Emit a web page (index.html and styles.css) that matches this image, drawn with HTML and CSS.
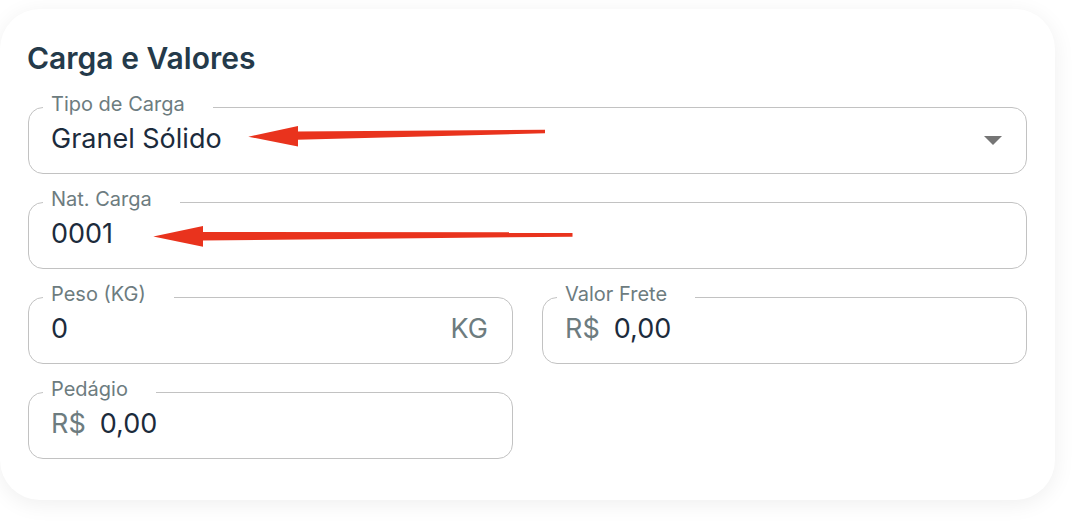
FILE: index.html
```html
<!DOCTYPE html>
<html lang="pt-BR">
<head>
<meta charset="utf-8">
<title>Carga e Valores</title>
<link rel="stylesheet" href="styles.css">
</head>
<body>
<main class="page">
  <section class="card">
    <h2 class="card-title">Carga e Valores</h2>
    <div class="fields">
      <fieldset class="field field-full">
        <legend class="field-label">Tipo de Carga</legend>
        <div class="field-row">
          <span class="field-value">Granel Sólido</span>
          <svg class="caret" width="18" height="9" viewBox="0 0 18 9" aria-hidden="true"><path d="M0 0 H18 L9 9 Z" fill="#757575"/></svg>
        </div>
      </fieldset>
      <fieldset class="field field-full">
        <legend class="field-label">Nat. Carga</legend>
        <div class="field-row">
          <span class="field-value">0001</span>
        </div>
      </fieldset>
      <fieldset class="field">
        <legend class="field-label">Peso (KG)</legend>
        <div class="field-row">
          <span class="field-value">0</span>
          <span class="adorn adorn-end">KG</span>
        </div>
      </fieldset>
      <fieldset class="field">
        <legend class="field-label">Valor Frete</legend>
        <div class="field-row">
          <span class="adorn adorn-start">R$</span>
          <span class="field-value">0,00</span>
        </div>
      </fieldset>
      <fieldset class="field">
        <legend class="field-label">Pedágio</legend>
        <div class="field-row">
          <span class="adorn adorn-start">R$</span>
          <span class="field-value">0,00</span>
        </div>
      </fieldset>
    </div>
  </section>
  <svg class="annotations" width="1083" height="527" viewBox="0 0 1083 527" aria-hidden="true">
    <polygon points="297,131.5 545,129.8 545,133.2 297,139.8" fill="#e9331d"/>
    <polygon points="248.3,136.7 298,126 298,146.5" fill="#e9331d"/>
    <polygon points="202,232 572.5,232.3 572.5,236.7 202,240.5" fill="#e9331d"/>
    <polygon points="153.3,236.4 203,226 203,246.7" fill="#e9331d"/>
  </svg>
</main>
</body>
</html>
```

FILE: styles.css
```css
* { box-sizing: border-box; }

html, body {
  margin: 0;
  padding: 0;
  background: #ffffff;
}

body {
  font-family: Inter, "Noto Sans", "Liberation Sans", sans-serif;
  width: 1083px;
  height: 527px;
  overflow: hidden;
}

.page {
  position: relative;
  width: 1083px;
  height: 527px;
  padding-top: 9px;
}

.card {
  width: 1055px;
  background: #ffffff;
  border-radius: 40px;
  box-shadow: 0 4px 22px rgba(0, 0, 0, 0.065);
  padding: 31px 28px 41px 28px;
}

.card-title {
  margin: 0 0 17px -1px;
  font-size: 30px;
  line-height: 36px;
  font-weight: 600;
  color: #243a4a;
}

.fields {
  display: grid;
  grid-template-columns: 1fr 1fr;
  column-gap: 29px;
  row-gap: 14px;
}

.field-full { grid-column: 1 / -1; }

.field {
  margin: 0;
  min-width: 0;
  border: 1px solid #c2c2c2;
  border-radius: 15px;
  padding: 0 24px 0 14px;
}

.field-label {
  padding: 0 28px 6px 8px;
  font-size: 20px;
  line-height: 22px;
  color: #6d7c7f;
}

.field-row {
  display: flex;
  align-items: center;
  height: 36px;
  margin: 0 0 16px 8px;
}

.field-value {
  font-size: 27px;
  line-height: 32px;
  color: #1c2b3c;
}

.adorn {
  font-size: 27px;
  line-height: 32px;
  color: #6d7c7f;
}

.adorn-start { margin-right: 14px; }
.adorn-end { margin-left: auto; }

.caret {
  margin-left: auto;
  margin-top: 3px;
}

.annotations {
  position: absolute;
  left: 0;
  top: 0;
  pointer-events: none;
}
```
